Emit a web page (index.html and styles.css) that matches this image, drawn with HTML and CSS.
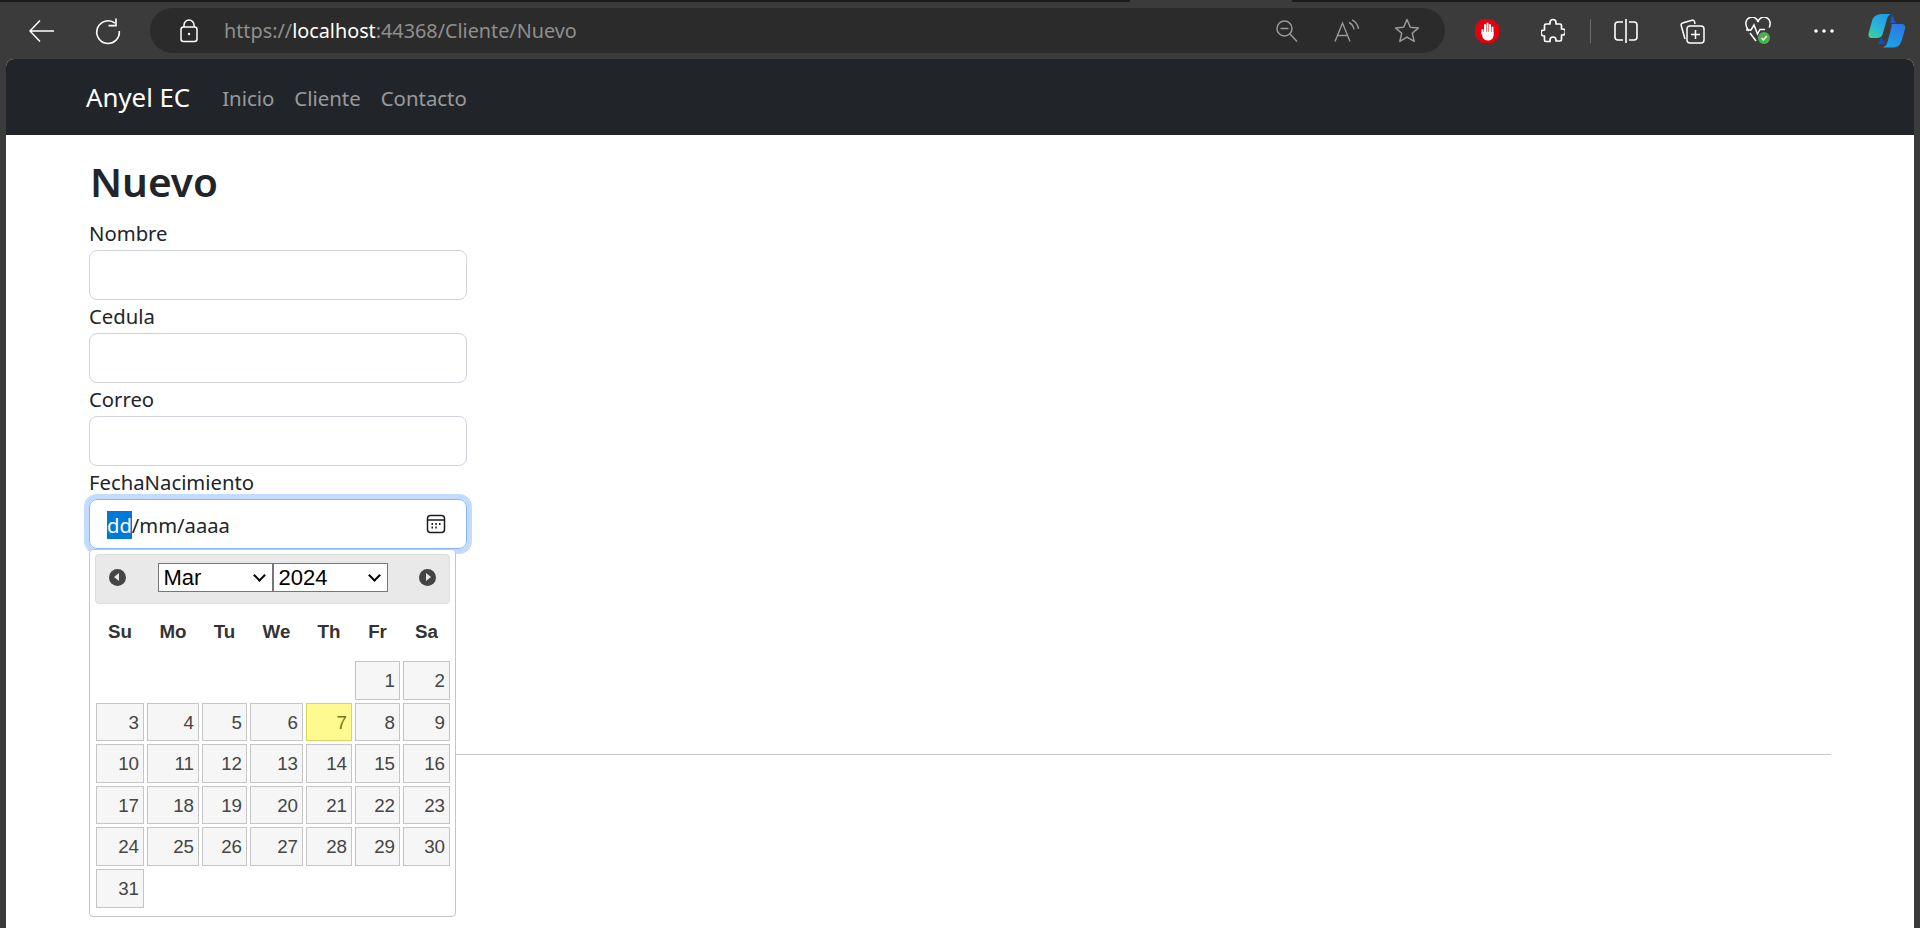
FILE: index.html
```html
<!DOCTYPE html>
<html lang="es">
<head>
  <meta charset="UTF-8">
  <title>Nuevo</title>
  <link rel="stylesheet" href="styles.css">
</head>
<body>

  <!-- Browser chrome -->
  <div class="tab-strip">
    <div class="tab-gap-left"></div>
    <div class="tab-active"></div>
    <div class="tab-gap-right"></div>
  </div>
  <div class="toolbar">
    <div class="tool-btn">
      <svg width="28" height="26" viewBox="0 0 28 26" fill="none" stroke="#fff" stroke-width="1.5"><path d="M2 13H26M12 2.5L2 13L12 23.5"/></svg>
    </div>
    <div class="tool-btn">
      <svg width="28" height="28" viewBox="0 0 28 28" fill="none" stroke="#fff" stroke-width="1.6"><path d="M21 6.2A11.3 11.3 0 1 0 25.3 14"/><path d="M22 1.5V8.6H14.5"/></svg>
    </div>

    <div class="address-bar">
      <svg class="lock-icon" width="18" height="24" viewBox="0 0 18 24" fill="none" stroke="#fff" stroke-width="1.5"><rect x="1" y="8" width="16" height="14.5" rx="2.5"/><path d="M4 8V6a5 5 0 0 1 10 0v2"/><circle cx="9" cy="15" r="1.2" fill="#fff" stroke="none"/></svg>
      <span class="url"><span class="url-scheme">https://</span><span class="url-host">localhost</span>:44368/Cliente/Nuevo</span>
      <div class="address-tools">
        <div class="address-tool">
          <svg width="24" height="24" viewBox="0 0 24 24" fill="none" stroke="#9a9a9a" stroke-width="1.5"><circle cx="9.5" cy="9.5" r="7.5"/><path d="M5.5 9.5H13.5M15 15L22 22.5"/></svg>
        </div>
        <div class="address-tool">
          <svg width="26" height="24" viewBox="0 0 26 24" fill="none" stroke="#9a9a9a" stroke-width="1.4"><path d="M1 22.5L8.5 4L16 22.5M3.5 16.5H13.5"/><path d="M15 3.5c3 1.5 4.5 4 5 7M18 .8c3.800 2 6 5 6.500 9"/></svg>
        </div>
        <div class="address-tool">
          <svg width="26" height="25" viewBox="0 0 26 25" fill="none" stroke="#9a9a9a" stroke-width="1.5" stroke-linejoin="round"><path d="M13 1.500L16.300 9.200L24.500 9.900L18.300 15.300L20.200 23.400L13 19.100L5.800 23.400L7.700 15.300L1.500 9.900L9.700 9.200Z"/></svg>
        </div>
      </div>
    </div>

    <div class="toolbar-icons">
      <div class="tool-btn">
        <svg width="26" height="26" viewBox="0 0 26 26"><polygon points="7.500,1 18.500,1 25,7.500 25,18.500 18.500,25 7.500,25 1,18.500 1,7.500" fill="#e3000f"/><path d="M8.500 12V16M11 7V14M13.500 5.500V14M16 7V14M18.500 9.500V17" fill="none" stroke="#fff" stroke-width="2" stroke-linecap="round"/><path d="M7.500 14H19.500V17C19.500 20 17.500 22.500 14 22.500C11 22.500 9.500 21 8.500 19Z" fill="#fff"/></svg>
      </div>
      <div class="tool-btn">
        <svg width="24" height="26" viewBox="0 0 24 26" fill="none" stroke="#fff" stroke-width="1.7" stroke-linejoin="round"><path d="M9 4.500a3 3 0 0 1 6 0V6h4a1.500 1.500 0 0 1 1.500 1.500V11h1a3 3 0 0 1 0 6h-1v4.500A1.500 1.500 0 0 1 19 23h-4v-1a3 3 0 0 0-6 0v1.500H5A1.500 1.500 0 0 1 3.500 22v-4H3a3 3 0 0 1 0-6h.500V7.500A1.500 1.500 0 0 1 5 6h4z"/></svg>
      </div>
      <div class="toolbar-sep"></div>
      <div class="tool-btn">
        <svg width="24" height="26" viewBox="0 0 24 26" fill="none" stroke="#fff" stroke-width="1.6"><path d="M9 4H4a3 3 0 0 0-3 3v12a3 3 0 0 0 3 3h5M15 4h5a3 3 0 0 1 3 3v12a3 3 0 0 1-3 3h-5M12 1V25"/></svg>
      </div>
      <div class="tool-btn">
        <svg width="26" height="26" viewBox="0 0 26 26" fill="none" stroke="#fff" stroke-width="1.5"><path d="M6 21L2.200 7.500a2 2 0 0 1 1.400-2.500L13 2.200a2 2 0 0 1 2.500 1.400L16 6"/><rect x="8" y="8" width="17" height="17" rx="3"/><path d="M16.500 12V21M12 16.500H21"/></svg>
      </div>
      <div class="tool-btn tool-health">
        <svg width="26" height="28" viewBox="0 0 26 28" fill="none" stroke="#fff" stroke-width="1.5"><path d="M4 14C1.500 11 1 9.500 1 7.500A6 6 0 0 1 13 5a6 6 0 0 1 12 2.500c0 1-.300 2-.800 3"/><path d="M1 13H6L9 8L12.500 17L15 12.500H20M5 16L11 24"/><circle cx="19" cy="21" r="6" fill="#4caf50" stroke="none"/><path d="M16.500 21L18.300 23L21.800 19" stroke-width="1.200"/></svg>
      </div>
      <div class="tool-btn">
        <svg width="20" height="4" viewBox="0 0 20 4" fill="#fff"><circle cx="2" cy="2" r="1.800"/><circle cx="10" cy="2" r="1.800"/><circle cx="18" cy="2" r="1.800"/></svg>
      </div>
      <div class="copilot">
        <svg width="38" height="34" viewBox="0 0 38 34">
          <defs>
            <linearGradient id="copilot-left" x1="0" y1="1" x2="0.600" y2="0">
              <stop offset="0" stop-color="#3dd68f"/>
              <stop offset="0.500" stop-color="#28b4d8"/>
              <stop offset="1" stop-color="#1f9de8"/>
            </linearGradient>
            <linearGradient id="copilot-right" x1="0.300" y1="1" x2="0.700" y2="0">
              <stop offset="0" stop-color="#1ba3ea"/>
              <stop offset="1" stop-color="#2f76e2"/>
            </linearGradient>
          </defs>
          <path d="M13 23L18 30H8C11 30 12 27 13 23Z" fill="#1b49c9"/>
          <path d="M24 1L28 9H22L23 4Z" fill="#1a57c4"/>
          <path d="M15 0H25C21 0 20 2 19 5L15 19C14 23 12 24 8 24H4C1 24 0 22 .700 19L4 7C5.200 2 9 0 15 0Z" fill="url(#copilot-left)"/>
          <path d="M23 10H33C36.500 10 37.800 12 37 15L33.500 27C32 32 28.500 33.500 24 33.500H13C17 33.500 18.500 31 19.500 28L23 15C23.500 12 24 10 23 10Z" fill="url(#copilot-right)"/>
        </svg>
      </div>
    </div>
  </div>

  <!-- Page inside the browser -->
  <div class="page">
    <nav class="navbar">
      <a class="brand">Anyel EC</a>
      <a class="nav-link">Inicio</a>
      <a class="nav-link">Cliente</a>
      <a class="nav-link">Contacto</a>
    </nav>

    <main class="content">
      <h1>Nuevo</h1>

      <label class="field-label">Nombre</label>
      <input class="form-control" type="text">
      <label class="field-label">Cedula</label>
      <input class="form-control" type="text">
      <label class="field-label">Correo</label>
      <input class="form-control" type="text">
      <label class="field-label">FechaNacimiento</label>

      <div class="date-field">
        <div class="date-text"><span class="date-selected">dd</span>/mm/aaaa</div>
        <svg class="date-icon" width="20" height="20" viewBox="0 0 20 20" fill="none" stroke="#1d1d1d" stroke-width="1.500"><rect x="1.500" y="1.500" width="17" height="17" rx="3"/><path d="M1.500 6H18.500"/><path d="M5.500 10H7M9.300 10H10.800M13 10H14.500M5.500 13.500H7M9.300 13.500H10.800" stroke-width="1.800"/></svg>

        <!-- Datepicker popup -->
        <div class="datepicker">
          <div class="dp-header">
            <span class="dp-nav dp-prev"></span>
            <div class="dp-selects">
              <span class="dp-select-wrap"><select class="dp-select"><option>Mar</option></select></span>
              <span class="dp-select-wrap"><select class="dp-select"><option>2024</option></select></span>
            </div>
            <span class="dp-nav dp-next"></span>
          </div>
          <div class="dp-weekdays">
            <span>Su</span><span>Mo</span><span>Tu</span><span>We</span><span>Th</span><span>Fr</span><span>Sa</span>
          </div>
          <div class="dp-days">
            <span class="dp-blank"></span><span class="dp-blank"></span><span class="dp-blank"></span><span class="dp-blank"></span><span class="dp-blank"></span>
            <a>1</a><a>2</a>
            <a>3</a><a>4</a><a>5</a><a>6</a><a class="dp-today">7</a><a>8</a><a>9</a>
            <a>10</a><a>11</a><a>12</a><a>13</a><a>14</a><a>15</a><a>16</a>
            <a>17</a><a>18</a><a>19</a><a>20</a><a>21</a><a>22</a><a>23</a>
            <a>24</a><a>25</a><a>26</a><a>27</a><a>28</a><a>29</a><a>30</a>
            <a>31</a>
          </div>
        </div>
      </div>

      <hr class="divider">
    </main>
  </div>

</body>
</html>
```

FILE: styles.css
```css
/* Browser window */
body {
  margin: 0;
  height: 928px;
  overflow: hidden;
  display: flex;
  flex-direction: column;
  background-color: #3b3b3b;
  font-family: "Noto Sans", sans-serif;
  color: #212529;
}
.tab-strip {
  display: flex;
  height: 2px;
}
.tab-gap-left {
  width: 1130px;
  background-color: #1c1c1c;
}
.tab-active {
  width: 162px;
}
.tab-gap-right {
  flex: 1;
  background-color: #1c1c1c;
}
/* Toolbar */
.toolbar {
  display: flex;
  align-items: center;
  height: 57px;
  padding-left: 9px;
}
.tool-btn {
  display: flex;
  align-items: center;
  justify-content: center;
  width: 66px;
  height: 45px;
}
.address-bar {
  display: flex;
  align-items: center;
  width: 1295px;
  height: 45px;
  margin-left: 9px;
  padding: 0 8px 0 30px;
  box-sizing: border-box;
  border-radius: 23px;
  background-color: #2b2b2b;
}
.url {
  margin-left: 26px;
  font-size: 19.8px;
  color: #8f8f8f;
}
.url-scheme {
  color: #8f8f8f;
}
.url-host {
  color: #fff;
}
.address-tools {
  display: flex;
  margin-left: auto;
}
.address-tool {
  display: flex;
  align-items: center;
  justify-content: center;
  width: 60px;
}
.toolbar-icons {
  display: flex;
  align-items: center;
  margin-left: 9px;
}
.toolbar-sep {
  width: 1px;
  height: 24px;
  margin: 0 2px 0 4px;
  background-color: #6c6c6c;
}
.copilot {
  display: flex;
  justify-content: center;
  width: 60px;
}
/* Page */
.page {
  flex: 1;
  margin: 0 6px;
  border-radius: 8px 8px 0 0;
  overflow: hidden;
  background-color: #fff;
}
.navbar {
  display: flex;
  align-items: center;
  height: 76px;
  padding-left: 80px;
  background-color: #212529;
}
.brand {
  margin-right: 32px;
  font-size: 25.8px;
  color: #fff;
}
.nav-link {
  margin-right: 20px;
  padding-top: 2px;
  font-size: 20.4px;
  color: rgba(255, 255, 255, 0.55);
}
.content {
  padding: 23px 83px 0;
}
h1 {
  margin: 0 0 11px 1px;
  font-size: 40.5px;
  font-weight: 600;
  line-height: 48px;
}
.field-label {
  display: block;
  font-size: 20.3px;
  line-height: 33px;
}
.form-control {
  display: block;
  width: 378px;
  height: 50px;
  padding: 0;
  box-sizing: border-box;
  border: 1px solid #ced4da;
  border-radius: 8px;
  background-color: #fff;
}
/* Date input, focused */
.date-field {
  position: relative;
  display: flex;
  align-items: center;
  justify-content: space-between;
  width: 378px;
  height: 50px;
  padding: 0 20px 0 17px;
  box-sizing: border-box;
  border: 1px solid #86b7fe;
  border-radius: 8px;
  box-shadow: 0 0 0 5px rgba(13, 110, 253, 0.25);
}
.date-text {
  padding-top: 2px;
  font-size: 20.2px;
}
.date-selected {
  background-color: #0078d7;
  color: #fff;
}
/* Datepicker */
.datepicker {
  position: absolute;
  top: 49px;
  left: -1px;
  width: 367px;
  height: 368px;
  padding: 4px 5px;
  box-sizing: border-box;
  border: 1px solid #c5c5c5;
  border-radius: 4px;
  background-color: #fff;
  font-family: "Liberation Sans", Arial, sans-serif;
  z-index: 2;
}
.dp-header {
  display: flex;
  align-items: center;
  justify-content: space-between;
  height: 50px;
  padding: 0 13px 3px;
  box-sizing: border-box;
  border: 1px solid #ddd;
  border-radius: 4px;
  background-color: #e9e9e9;
}
.dp-nav {
  position: relative;
  width: 17px;
  height: 17px;
  border-radius: 50%;
  background-color: #454545;
}
.dp-prev::after,
.dp-next::after {
  content: "";
  position: absolute;
  top: 4px;
  border-top: 4.5px solid transparent;
  border-bottom: 4.5px solid transparent;
}
.dp-prev::after {
  left: 5px;
  border-right: 5px solid #e9e9e9;
}
.dp-next::after {
  left: 7px;
  border-left: 5px solid #e9e9e9;
}
.dp-selects {
  display: flex;
}
.dp-select-wrap {
  position: relative;
  display: block;
}
.dp-select-wrap::after {
  content: "";
  position: absolute;
  top: 8px;
  right: 9px;
  width: 7px;
  height: 7px;
  border-right: 2px solid #000;
  border-bottom: 2px solid #000;
  transform: rotate(45deg);
  pointer-events: none;
}
.dp-select {
  display: block;
  appearance: none;
  width: 115px;
  height: 29px;
  padding: 0 0 0 5px;
  font-family: "Liberation Sans", Arial, sans-serif;
  font-size: 22px;
  background-color: #fff;
  border: 1px solid #767676;
  border-radius: 0;
  color: #000;
}
.dp-weekdays,
.dp-days {
  display: grid;
  grid-template-columns: 48px 52px 45px 53px 46px 45px 47px;
  column-gap: 3px;
  padding-left: 1px;
}
.dp-weekdays {
  height: 55px;
  padding-bottom: 2px;
  align-items: center;
  font-size: 18.75px;
  font-weight: bold;
  color: #333;
  text-align: center;
}
.dp-days {
  grid-auto-rows: 38.6px;
  row-gap: 3px;
  font-size: 18.75px;
}
.dp-days a {
  padding-right: 4px;
  box-sizing: border-box;
  border: 1px solid #c5c5c5;
  background-color: #f6f6f6;
  color: #454545;
  text-align: right;
  line-height: 37px;
}
.dp-days .dp-today {
  border-color: #dad55e;
  background-color: #fffa90;
  color: #777620;
}
.divider {
  height: 1px;
  margin: 205px 0 0;
  border: 0;
  background-color: #c8c8c8;
}
```
